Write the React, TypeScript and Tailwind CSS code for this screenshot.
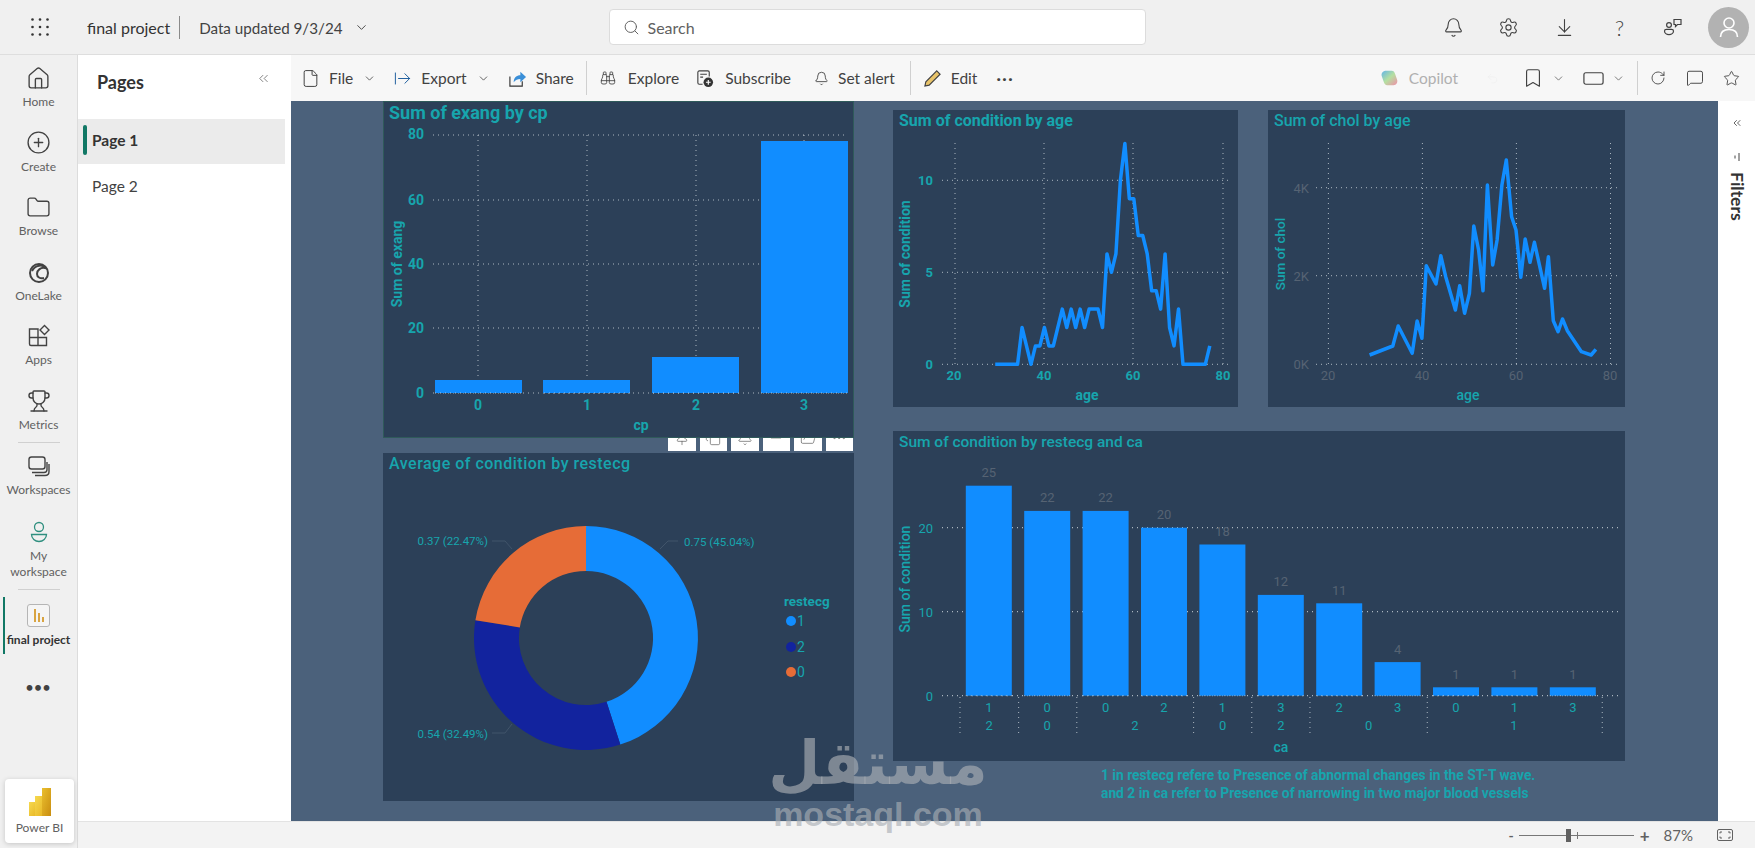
import {
  ArrowDownToLine, ArrowRightFromLine, Binoculars, Bell, Bookmark, ChevronDown, ChevronsLeft, CirclePlus, Copy, Ellipsis,
  File, Folder, FolderOpen, House, MessageSquare, Minus, Pin, RectangleHorizontal, RotateCw, Search, Settings, Star, Trophy, Undo2,
} from "lucide-react";
import type { ReactNode } from "react";

const TEAL = "#17a5ad";
const BLUE = "#118dff";
const DIM = "#566373";
const GRID = "#cdd5dc";
const CHART_FONT = "Roboto, 'Liberation Sans', sans-serif";

const sumCondition: [number, number][] = [
  [29, 0], [34, 0], [35, 2], [37, 0], [38, 1], [39, 1], [40, 2], [41, 1], [42, 1], [43, 2], [44, 3], [45, 2], [46, 3],
  [47, 2], [48, 3], [49, 2], [50, 3], [51, 3], [52, 3], [53, 2], [54, 6], [55, 5], [56, 6], [57, 10], [58, 12], [59, 9],
  [60, 9], [61, 7], [62, 7], [63, 6], [64, 4], [65, 4], [66, 3], [67, 6], [68, 2], [69, 1], [70, 3], [71, 0], [76, 0], [77, 1],
];

// read from the picture, in 2.063x / 3x crop coordinates
const sumChol: [number, number][] = [
  [1010, 765], [1058, 738], [1069, 678], [1098, 760], [1108, 663], [1118, 715], [1127, 497], [1147, 552], [1157, 467],
  [1167, 530], [1187, 630], [1196, 557], [1206, 640], [1216, 580], [1225, 378], [1235, 450], [1244, 572], [1253, 255],
  [1264, 495], [1273, 420], [1283, 255], [1292, 180], [1303, 350], [1312, 390], [1322, 532], [1331, 417], [1341, 487],
  [1350, 427], [1371, 565], [1379, 470], [1389, 662], [1399, 695], [1408, 657], [1418, 692], [1447, 755], [1467, 765], [1477, 748],
];

const caBars = [
  { v: 25, ca: "1" }, { v: 22, ca: "0" }, { v: 22, ca: "0" }, { v: 20, ca: "2" }, { v: 18, ca: "1" }, { v: 12, ca: "3" },
  { v: 11, ca: "2" }, { v: 4, ca: "3" }, { v: 1, ca: "0" }, { v: 1, ca: "1" }, { v: 1, ca: "3" },
];

const visualActions = [Pin, Copy, Bell, Minus, FolderOpen, Ellipsis];

function RailItem({ icon, label, h = "h-[64.5px]", bold }: { icon: ReactNode; label: ReactNode; h?: string; bold?: boolean }) {
  return (
    <div className={`${h} flex flex-col items-center pt-[10px] text-center`}>
      <div className="h-[26px] flex items-center justify-center text-[#424242]">{icon}</div>
      <span className={`mt-[3px] text-[12px] leading-[16px] ${bold ? "font-bold text-[#333]" : "text-[#616161]"}`}>{label}</span>
    </div>
  );
}

function ToolBtn({ icon, label, caret, className = "" }: { icon: ReactNode; label: string; caret?: boolean; className?: string }) {
  return (
    <div className={`flex items-center text-[15.500px] text-[#424242] ${className}`}>
      {icon}
      <span className="ml-[9px] pt-[1px]">{label}</span>
      {caret && <ChevronDown size={13} strokeWidth={1.5} className="ml-[10px]" />}
    </div>
  );
}

function Panel({ title, className, titleClass, children }: { title: string; className: string; titleClass: string; children: ReactNode }) {
  return (
    <div className={`bg-[#2c4058] flex flex-col ${className}`} style={{ fontFamily: CHART_FONT }}>
      <div className={`pl-[6px] text-[#17a5ad] whitespace-nowrap ${titleClass}`}>{title}</div>
      {children}
    </div>
  );
}

function Txt({ x, y, children, size = 13, fill = TEAL, weight = 700, anchor = "middle", rotate }: {
  x: number; y: number; children: ReactNode; size?: number; fill?: string; weight?: number; anchor?: "middle" | "start" | "end"; rotate?: boolean;
}) {
  return (
    <text x={x} y={y} fontSize={size} fill={fill} fontWeight={weight} textAnchor={anchor} dominantBaseline="central"
      transform={rotate ? `rotate(-90 ${x} ${y})` : undefined}>
      {children}
    </text>
  );
}

function Dots({ x1, y1, x2, y2, w = 1 }: { x1: number; y1: number; x2: number; y2: number; w?: number }) {
  return <line x1={x1} y1={y1} x2={x2} y2={y2} stroke={GRID} strokeWidth={w} strokeDasharray="1 4" opacity={0.8} />;
}

function ExangChart() {
  const bars = [[435, 380], [543, 380], [652, 357], [761, 141]];
  return (
    <svg viewBox="383 128 471 310" className="w-[471px] h-[310px]">
      {[135, 200, 264, 328, 393].map((y) => <Dots key={y} x1={433} y1={y} x2={847} y2={y} />)}
      {[478, 587, 696, 804].map((x) => <Dots key={x} x1={x} y1={135} x2={x} y2={393} />)}
      {bars.map(([x, t]) => <rect key={x} x={x} y={t} width={87} height={393 - t} fill={BLUE} />)}
      {[478, 587, 696, 804].map((x) => <Dots key={x} x1={x - 43} y1={393} x2={x + 43} y2={393} />)}
      {[["80", 134], ["60", 200], ["40", 264], ["20", 328], ["0", 393]].map(([l, y]) => (
        <Txt key={l} x={424} y={Number(y)} anchor="end" size={14}>{l}</Txt>
      ))}
      {[0, 1, 2, 3].map((n, i) => <Txt key={n} x={[478, 587, 696, 804][i]} y={405} size={14}>{n}</Txt>)}
      <Txt x={641} y={425} size={14}>cp</Txt>
      <Txt x={397} y={264} size={14} rotate>Sum of exang</Txt>
    </svg>
  );
}

function arc(cx: number, cy: number, ro: number, ri: number, a0: number, a1: number) {
  const p = (r: number, a: number) => `${(cx + r * Math.sin(a)).toFixed(1)} ${(cy - r * Math.cos(a)).toFixed(1)}`;
  const large = a1 - a0 > Math.PI ? 1 : 0;
  return `M${p(ro, a0)} A${ro} ${ro} 0 ${large} 1 ${p(ro, a1)} L${p(ri, a1)} A${ri} ${ri} 0 ${large} 0 ${p(ri, a0)} Z`;
}

function DonutChart() {
  const t = Math.PI * 2;
  const a = 0.4504 * t;
  const b = a + 0.3249 * t;
  return (
    <svg viewBox="383 480 471 320" className="w-[471px] h-[320px]">
      <path d={arc(586, 637, 112, 67, 0, a)} fill={BLUE} />
      <path d={arc(586, 637, 112, 67, a, b)} fill="#12239e" />
      <path d={arc(586, 637, 112, 67, b, t)} fill="#e66c37" />
      <g fill="none" stroke="#41546a" strokeWidth={1}>
        <path d="M660 548 L668 540 L678 540" />
        <path d="M492 540 L505 540 L512 548" />
        <path d="M492 732 L505 732 L512 723" />
      </g>
      <Txt x={684} y={541} anchor="start" size={11.5} weight={400}>0.75 (45.04%)</Txt>
      <Txt x={488} y={540} anchor="end" size={11.5} weight={400}>0.37 (22.47%)</Txt>
      <Txt x={488} y={733} anchor="end" size={11.5} weight={400}>0.54 (32.49%)</Txt>
      <Txt x={784} y={600} anchor="start" size={13.5}>restecg</Txt>
      {[["1", 620, BLUE], ["2", 646, "#12239e"], ["0", 671, "#e66c37"]].map(([l, y, c]) => (
        <g key={String(l)}>
          <circle cx={791} cy={Number(y)} r={5} fill={String(c)} />
          <Txt x={797} y={Number(y)} anchor="start" size={14} weight={400}>{l}</Txt>
        </g>
      ))}
    </svg>
  );
}

function ConditionChart() {
  const pts = sumCondition.map(([a, v]) => `${955 + (a - 20) * 4.47},${364.3 - v * 18.4}`).join(" ");
  return (
    <svg viewBox="893 135 345 272" className="w-[345px] h-[272px]">
      {[180.3, 272.3, 364.3].map((y) => <Dots key={y} x1={942} y1={y} x2={1229} y2={y} />)}
      {[955, 1044, 1133, 1223].map((x) => <Dots key={x} x1={x} y1={143} x2={x} y2={364} />)}
      <polyline points={pts} fill="none" stroke={BLUE} strokeWidth={3.5} strokeLinejoin="round" />
      {[["10", 180], ["5", 272], ["0", 364]].map(([l, y]) => <Txt key={l} x={933} y={Number(y)} anchor="end" size={13}>{l}</Txt>)}
      {[["20", 954], ["40", 1044], ["60", 1133], ["80", 1223]].map(([l, x]) => <Txt key={l} x={Number(x)} y={375} size={13}>{l}</Txt>)}
      <Txt x={1087} y={395} size={14}>age</Txt>
      <Txt x={905} y={254} size={14} rotate>Sum of condition</Txt>
    </svg>
  );
}

function CholChart() {
  const pts = sumChol.map(([x, y]) => `${(880 + x / 2.063).toFixed(1)},${(100 + y / 3).toFixed(1)}`).join(" ");
  return (
    <svg viewBox="1268 135 357 272" className="w-[357px] h-[272px]">
      {[187.7, 275.7, 364.3].map((y) => <Dots key={y} x1={1316} y1={y} x2={1619} y2={y} />)}
      {[1328.4, 1422.4, 1516.4, 1610.5].map((x) => <Dots key={x} x1={x} y1={143} x2={x} y2={364} />)}
      <polyline points={pts} fill="none" stroke={BLUE} strokeWidth={3.5} strokeLinejoin="round" />
      {[["4K", 188], ["2K", 276], ["0K", 364]].map(([l, y]) => <Txt key={l} x={1309} y={Number(y)} anchor="end" size={13} fill={DIM} weight={400}>{l}</Txt>)}
      {[["20", 1328], ["40", 1422], ["60", 1516], ["80", 1610]].map(([l, x]) => <Txt key={l} x={Number(x)} y={375} size={13} fill={DIM} weight={400}>{l}</Txt>)}
      <Txt x={1468} y={395} size={14} weight={500}>age</Txt>
      <Txt x={1280} y={254} size={13.5} weight={500} rotate>Sum of chol</Txt>
    </svg>
  );
}

function CaChart() {
  const x0 = 965.8;
  const step = 58.4;
  return (
    <svg viewBox="893 457 732 304" className="w-[732px] h-[304px]">
      {[527.7, 611.7, 695.7].map((y) => <Dots key={y} x1={942} y1={y} x2={1619} y2={y} w={1.2} />)}
      {caBars.map((b, i) => {
        const x = x0 + i * step;
        const top = 695.7 - b.v * 8.4;
        return (
          <g key={i}>
            <rect x={x} y={top} width={46} height={b.v * 8.4} fill={BLUE} />
            <Dots x1={x} y1={695.7} x2={x + 46} y2={695.7} />
            <Txt x={x + 23} y={top - 13} size={13} fill={DIM} weight={400}>{b.v}</Txt>
            <Txt x={x + 23} y={707} size={13} weight={400}>{b.ca}</Txt>
          </g>
        );
      })}
      {[165, 286, 406, 647, 767, 887, 1129, 1490].map((X) => (
        <Dots key={X} x1={880 + X / 2.063} y1={697} x2={880 + X / 2.063} y2={735} />
      ))}
      {[["2", 225], ["0", 345], ["2", 526], ["0", 707], ["2", 827], ["0", 1008], ["1", 1308]].map(([l, X]) => (
        <Txt key={String(X)} x={880 + Number(X) / 2.063} y={725} size={13} weight={400}>{l}</Txt>
      ))}
      {[["20", 528], ["10", 612], ["0", 696]].map(([l, y]) => <Txt key={l} x={933} y={Number(y)} anchor="end" size={13} weight={400}>{l}</Txt>)}
      <Txt x={1281} y={747} size={14} weight={500}>ca</Txt>
      <Txt x={905} y={579} size={14} weight={500} rotate>Sum of condition</Txt>
    </svg>
  );
}

export default function App() {
  return (
    <div className="w-[1755px] h-[848px] overflow-hidden relative flex flex-col bg-[#f0f0f0]" style={{ fontFamily: "Lato, 'Open Sans', sans-serif" }}>
      {/* top bar */}
      <header className="h-[55px] shrink-0 flex items-center border-b border-[#dedede] relative">
        <svg viewBox="0 0 18 18" className="w-[18px] h-[18px] ml-[31px] text-[#333]" fill="currentColor">
          {[1.5, 9, 16.5].map((y) => [1.5, 9, 16.5].map((x) => <circle key={`${x}${y}`} cx={x} cy={y} r={1.3} />))}
        </svg>
        <span className="ml-[38px] pt-[2px] text-[16px] text-[#333]">final project</span>
        <span className="ml-[9px] w-px h-[23px] bg-[#8a8a8a]" />
        <span className="ml-[19px] pt-[2px] text-[15.200px] text-[#424242]">Data updated 9/3/24</span>
        <ChevronDown size={15} strokeWidth={1.5} className="ml-[11px] text-[#424242]" />
        <div className="ml-[240px] w-[537px] h-[36px] bg-white rounded-[4px] border border-[#dcdcdc] flex items-center pl-[13px] text-[#616161]">
          <Search size={17} strokeWidth={1.4} />
          <span className="ml-[8px] pt-[2px] text-[16px]">Search</span>
        </div>
        <div className="flex items-center text-[#424242] ml-auto mr-[6px]">
          <Bell size={21} strokeWidth={1.25} />
          <Settings size={21} strokeWidth={1.25} className="ml-[34px]" />
          <ArrowDownToLine size={21} strokeWidth={1.25} className="ml-[35px]" />
          <span className="ml-[40px] text-[21px] font-light leading-none">?</span>
          <svg viewBox="0 0 20 20" className="w-[20px] h-[20px] ml-[39px]" fill="none" stroke="currentColor" strokeWidth="1.2">
            <circle cx="6" cy="8" r="2.4" />
            <path d="M1.5 14c0-1 1-1.6 2-1.6h5c1 0 2 .6 2 1.6 0 2-2 3.6-4.5 3.6S1.5 16 1.5 14z" />
            <path d="M11 2.5h7v5h-3.5l-2 2v-2H11z" />
          </svg>
          <div className="ml-[25px] w-[41px] h-[41px] rounded-full bg-[#b2b2b2] flex items-center justify-center">
            <svg viewBox="0 0 24 24" className="w-[24px] h-[24px]" fill="none" stroke="white" strokeWidth="1.6">
              <circle cx="12" cy="8" r="5" />
              <path d="M3.5 22c0-5 3.5-7.5 8.500-7.500s8.500 2.500 8.500 7.500" />
            </svg>
          </div>
        </div>
      </header>

      <div className="flex-1 flex min-h-0">
        {/* nav rail */}
        <nav className="w-[78px] shrink-0 flex flex-col border-r border-[#dcdcdc] relative">
          <RailItem icon={<House size={25} strokeWidth={1.3} />} label="Home" />
          <RailItem icon={<CirclePlus size={25} strokeWidth={1.3} />} label="Create" />
          <RailItem icon={<Folder size={25} strokeWidth={1.3} />} label="Browse" />
          <RailItem
            icon={
              <svg viewBox="0 0 24 24" className="w-[24px] h-[24px]" fill="none" stroke="#424242" strokeWidth="2">
                <circle cx="12" cy="13" r="9" />
                <path d="M5 11c3-6 11-7 13-3-4-1-8 2-8 6 0 3 3 5 7 4" />
              </svg>
            }
            label="OneLake"
          />
          <RailItem
            icon={
              <svg viewBox="0 0 24 24" className="w-[24px] h-[24px]" fill="none" stroke="currentColor" strokeWidth="1.4">
                <path d="M2.500 5h8.500v8.500h8.500V21.500H4a1.500 1.500 0 0 1-1.500-1.500zM2.500 13.500H11V21.500" />
                <path d="M17.500 1.500l4.500 4.500-4.500 4.500L13 6z" />
              </svg>
            }
            label="Apps"
          />
          <RailItem icon={<Trophy size={24} strokeWidth={1.4} />} label="Metrics" h="h-[64px]" />
          <div className="mx-auto w-[42px] h-px bg-[#d0d0d0]" />
          <RailItem
            icon={
              <svg viewBox="0 0 24 24" className="w-[24px] h-[24px]" fill="none" stroke="currentColor" strokeWidth="1.4">
                <rect x="2" y="3" width="16" height="12" rx="2.500" />
                <path d="M5 18.500h12c2 0 3-1 3-3V8M8 21.500h10c2.500 0 4-1.500 4-4V10" />
              </svg>
            }
            label="Workspaces"
            h="h-[66px]"
          />
          <RailItem
            icon={
              <svg viewBox="0 0 24 24" className="w-[24px] h-[24px]" fill="none" stroke="#2f8f7f" strokeWidth="1.3">
                <circle cx="12" cy="7" r="4.500" />
                <path d="M4.500 14.500h15c0 4-3.500 7-7.500 7s-7.500-3-7.500-7z" />
              </svg>
            }
            label={<>My<br />workspace</>}
            h="h-[80px]"
          />
          <div className="mx-auto w-[42px] h-px bg-[#d0d0d0]" />
          <div className="relative pt-[3px]">
            <span className="absolute left-[3px] top-[7px] w-[2px] h-[57px] bg-[#117865]" />
            <RailItem
              icon={
                <div className="w-[23px] h-[23px] rounded-[3px] border border-[#b5b5b5] bg-[#f5f5f5] flex items-end justify-center gap-[2px] pb-[4px]">
                  <span className="w-[2px] h-[13px] bg-[#d9a441]" />
                  <span className="w-[2px] h-[9px] bg-[#d9a441]" />
                  <span className="w-[2px] h-[5px] bg-[#d9a441]" />
                </div>
              }
              label="final project"
              bold
              h="h-[70px]"
            />
          </div>
          <div className="mt-[18px] text-center text-[#424242] font-bold text-[13px] leading-none tracking-[1px]">•••</div>
          <div className="absolute left-[5px] top-[724px] w-[69px] h-[64px] bg-white rounded-[4px] shadow-[0_1px_5px_rgba(0,0,0,0.18)] flex flex-col items-center pt-[9px] z-10">
            <svg viewBox="0 0 22 28" className="w-[22px] h-[28px]">
              <defs>
                <linearGradient id="pb1" x1="0" y1="0" x2="1" y2="1"><stop offset="0" stopColor="#f6d94f" /><stop offset="1" stopColor="#e7b422" /></linearGradient>
                <linearGradient id="pb2" x1="0" y1="0" x2="1" y2="1"><stop offset="0" stopColor="#eabf2e" /><stop offset="1" stopColor="#c98d10" /></linearGradient>
              </defs>
              <rect x="0" y="14" width="9" height="14" fill="url(#pb1)" />
              <rect x="6" y="8" width="9" height="20" fill="url(#pb1)" />
              <rect x="13" y="0" width="9" height="28" fill="url(#pb2)" />
            </svg>
            <span className="mt-[3px] text-[12px] text-[#616161]">Power BI</span>
          </div>
        </nav>

        <div className="flex-1 flex flex-col min-w-0">
          <div className="flex-1 flex min-h-0">
            {/* pages pane */}
            <aside className="w-[213px] shrink-0 bg-white flex flex-col">
              <div className="h-[54px] mb-[10px] flex items-center justify-between pl-[19px] pr-[20px]">
                <span className="text-[18px] font-bold text-[#333]">Pages</span>
                <ChevronsLeft size={15} strokeWidth={1.25} className="text-[#616161] -mt-[8px]" />
              </div>
              <div className="h-[45px] w-[207px] bg-[#ebebeb] flex items-center relative pl-[14px] pb-[2px] text-[15.500px] font-bold text-[#333]">
                <span className="absolute left-[5px] top-[6px] w-[4px] h-[30px] rounded-[2px] bg-[#117865]" />
                Page 1
              </div>
              <div className="h-[45px] flex items-center pl-[14px] text-[15.500px] text-[#424242]">Page 2</div>
            </aside>

            <div className="flex-1 flex flex-col min-w-0">
              {/* report toolbar */}
              <div className="h-[46px] shrink-0 bg-[#f7f7f7] flex items-center pl-[10px]">
                <ToolBtn icon={<File size={19} strokeWidth={1.25} />} label="File" caret />
                <ToolBtn className="ml-[17px]" icon={<ArrowRightFromLine size={19} strokeWidth={1.25} className="text-[#1f5f9e]" />} label="Export" caret />
                <ToolBtn
                  className="ml-[18px]"
                  icon={
                    <svg viewBox="0 0 20 20" className="w-[19px] h-[19px]" fill="none">
                      <path d="M2 8v10h13v-5" stroke="#333" strokeWidth="1.2" />
                      <path d="M6 14c0-5 3-7.500 7-7.500V3l6 5.500-6 5.500v-3.500c-3 0-5 1-7 3.500z" fill="#3a8fd8" />
                    </svg>
                  }
                  label="Share"
                />
                <span className="ml-[12px] w-px h-[34px] bg-[#d0d0d0]" />
                <ToolBtn className="ml-[13px]" icon={<Binoculars size={16} strokeWidth={1.3} className="mr-[3px]" />} label="Explore" />
                <ToolBtn
                  className="ml-[16px]"
                  icon={
                    <svg viewBox="0 0 20 20" className="w-[19px] h-[19px] mr-[2px]" fill="none" stroke="#424242" strokeWidth="1.2">
                      <path d="M8 16H4.500A1.500 1.500 0 0 1 3 14.500v-11A1.500 1.500 0 0 1 4.500 2h9A1.500 1.500 0 0 1 15 3.500V8" />
                      <path d="M5.500 5.500h7M5.500 8.500h3" />
                      <circle cx="14" cy="14" r="5" fill="#333" stroke="none" />
                      <path d="M14 11.500v5M11.500 14h5" stroke="white" />
                    </svg>
                  }
                  label="Subscribe"
                />
                <ToolBtn className="ml-[23px]" icon={<Bell size={15} strokeWidth={1.4} />} label="Set alert" />
                <span className="ml-[15px] w-px h-[34px] bg-[#d0d0d0]" />
                <ToolBtn
                  className="ml-[12px]"
                  icon={
                    <svg viewBox="0 0 20 20" className="w-[19px] h-[19px]">
                      <path d="M14.500 2l3.500 3.500L6.500 17 2 18l1-4.500z" fill="#e9c46a" stroke="#424242" strokeWidth="1.2" />
                    </svg>
                  }
                  label="Edit"
                />
                <span className="ml-[19px] text-[16px] font-bold tracking-[1.5px] text-[#424242] leading-none">···</span>
                <div className="ml-auto flex items-center">
                  <svg viewBox="0 0 20 20" className="w-[18px] h-[18px]">
                    <defs>
                      <linearGradient id="cop" x1="0" y1="0" x2="1" y2="1">
                        <stop offset="0" stopColor="#63b5e8" /><stop offset="0.5" stopColor="#b5e0a0" /><stop offset="1" stopColor="#f08fa8" />
                      </linearGradient>
                    </defs>
                    <path d="M7 2h6c2 0 3 1 4 4l2 6c1 3-1 6-4 6H8c-2 0-3-1-4-4L2 8c-1-3 1-6 5-6z" fill="url(#cop)" />
                  </svg>
                  <span className="ml-[11px] pt-[1px] text-[15.500px] text-[#b0b0b0]">Copilot</span>
                  <Undo2 size={13} strokeWidth={1.2} className="ml-[28px] text-[#f0f0f0]" />
                  <Bookmark size={22} strokeWidth={1.25} className="ml-[23px] text-[#424242]" />
                  <ChevronDown size={13} strokeWidth={1.5} className="ml-[8px] text-[#616161]" />
                  <RectangleHorizontal size={23} strokeWidth={1.25} className="ml-[17px] text-[#424242]" />
                  <ChevronDown size={13} strokeWidth={1.5} className="ml-[7px] text-[#616161]" />
                  <span className="ml-[12px] w-px h-[34px] bg-[#d0d0d0]" />
                  <RotateCw size={16} strokeWidth={1.3} className="ml-[12px] text-[#424242]" />
                  <MessageSquare size={18} strokeWidth={1.25} className="ml-[20px] text-[#424242]" />
                  <Star size={17} strokeWidth={1.25} className="ml-[19px] mr-[15px] text-[#424242]" />
                </div>
              </div>

              <div className="flex-1 flex min-h-0">
                {/* report canvas */}
                <main className="flex-1 min-w-0 bg-[#4b617b] flex pl-[92px]">
                  <div className="w-[471px] flex flex-col">
                    <div className="relative">
                      <Panel title="Sum of exang by cp" className="h-[337px] outline outline-[#2f5a5a] -outline-offset-1" titleClass="h-[27px] text-[18px] font-bold leading-[23px]">
                        <ExangChart />
                      </Panel>
                      <div className="absolute right-px top-[337px] flex gap-[4px]">
                        {visualActions.map((Icon, i) => (
                          <div key={i} className="h-[13px] w-[27.500px] bg-white overflow-hidden flex justify-center text-[#555]">
                            <Icon size={16} strokeWidth={1} className="-mt-[8px]" />
                          </div>
                        ))}
                      </div>
                    </div>
                    <Panel title="Average of condition by restecg" className="mt-[15px] h-[348px]" titleClass="h-[27px] pt-[1px] text-[16px] font-medium tracking-[0.5px] leading-[20px]">
                      <div className="flex-1" />
                      <DonutChart />
                    </Panel>
                  </div>
                  <div className="ml-[39px] w-[732px] flex flex-col pt-[9px]">
                    <div className="flex gap-[30px]">
                      <Panel title="Sum of condition by age" className="h-[297px] w-[345px]" titleClass="h-[25px] text-[16px] font-bold leading-[22px]">
                        <ConditionChart />
                      </Panel>
                      <Panel title="Sum of chol by age" className="h-[297px] w-[357px]" titleClass="h-[25px] text-[16px] font-medium leading-[22px]">
                        <CholChart />
                      </Panel>
                    </div>
                    <Panel title="Sum of condition by restecg and ca" className="mt-[24px] h-[330px]" titleClass="h-[26px] text-[15.500px] font-medium leading-[22px]">
                      <CaChart />
                    </Panel>
                    <div className="mt-[5px] pl-[208px] text-[13.800px] font-bold leading-[18px] text-[#17a5ad] whitespace-nowrap" style={{ fontFamily: CHART_FONT }}>
                      <p>1 in restecg refere to Presence of abnormal changes in the ST-T wave.</p>
                      <p>and 2 in ca refer to Presence of narrowing in two major blood vessels</p>
                    </div>
                  </div>
                </main>
                {/* filters pane */}
                <aside className="w-[37px] shrink-0 bg-white flex flex-col items-center pt-[16px] text-[#333]">
                  <ChevronsLeft size={12} strokeWidth={1.5} />
                  <svg viewBox="0 0 10 10" className="w-[10px] h-[10px] mt-[23px]" stroke="#424242" strokeWidth="1">
                    <path d="M3 3.500v3M7 1v8" />
                  </svg>
                  <span className="mt-[10px] text-[17.500px] font-bold [writing-mode:vertical-rl]">Filters</span>
                </aside>
              </div>
            </div>
          </div>

          {/* status bar */}
          <footer className="h-[27px] shrink-0 bg-[#f3f3f3] border-t border-[#e3e3e3] flex items-center justify-end text-[#616161] pr-[22px]">
            <span className="text-[14px] font-bold">-</span>
            <div className="ml-[5px] w-[115px] h-px bg-[#777] relative">
              <span className="absolute left-[47px] -top-[6px] w-[5px] h-[13px] bg-[#616161]" />
              <span className="absolute left-[58px] -top-[3px] w-px h-[7px] bg-[#777]" />
            </div>
            <span className="ml-[6px] text-[17px] font-bold leading-none">+</span>
            <span className="ml-[14px] text-[15px]">87%</span>
            <svg viewBox="0 0 16 12" className="ml-[24px] w-[16px] h-[12px]" fill="none" stroke="#616161" strokeWidth="1">
              <rect x="0.500" y="0.500" width="15" height="11" rx="1.500" />
              <path d="M3 4.500V3h2M13 4.500V3h-2M3 7.500V9h2M13 7.500V9h-2" />
            </svg>
          </footer>
        </div>
      </div>

      {/* watermark */}
      <div className="absolute left-[772px] top-[727px] w-[212px] flex flex-col items-center pointer-events-none text-[#a9aeb4]/65 font-bold">
        <div dir="rtl" className="text-[60px] leading-[72px] whitespace-nowrap" style={{ fontFamily: "'DejaVu Sans', sans-serif" }}>مستقل</div>
        <div className="text-[34px] leading-[30px] whitespace-nowrap" style={{ fontFamily: "'Liberation Sans', sans-serif" }}>mostaql.com</div>
      </div>
    </div>
  );
}
